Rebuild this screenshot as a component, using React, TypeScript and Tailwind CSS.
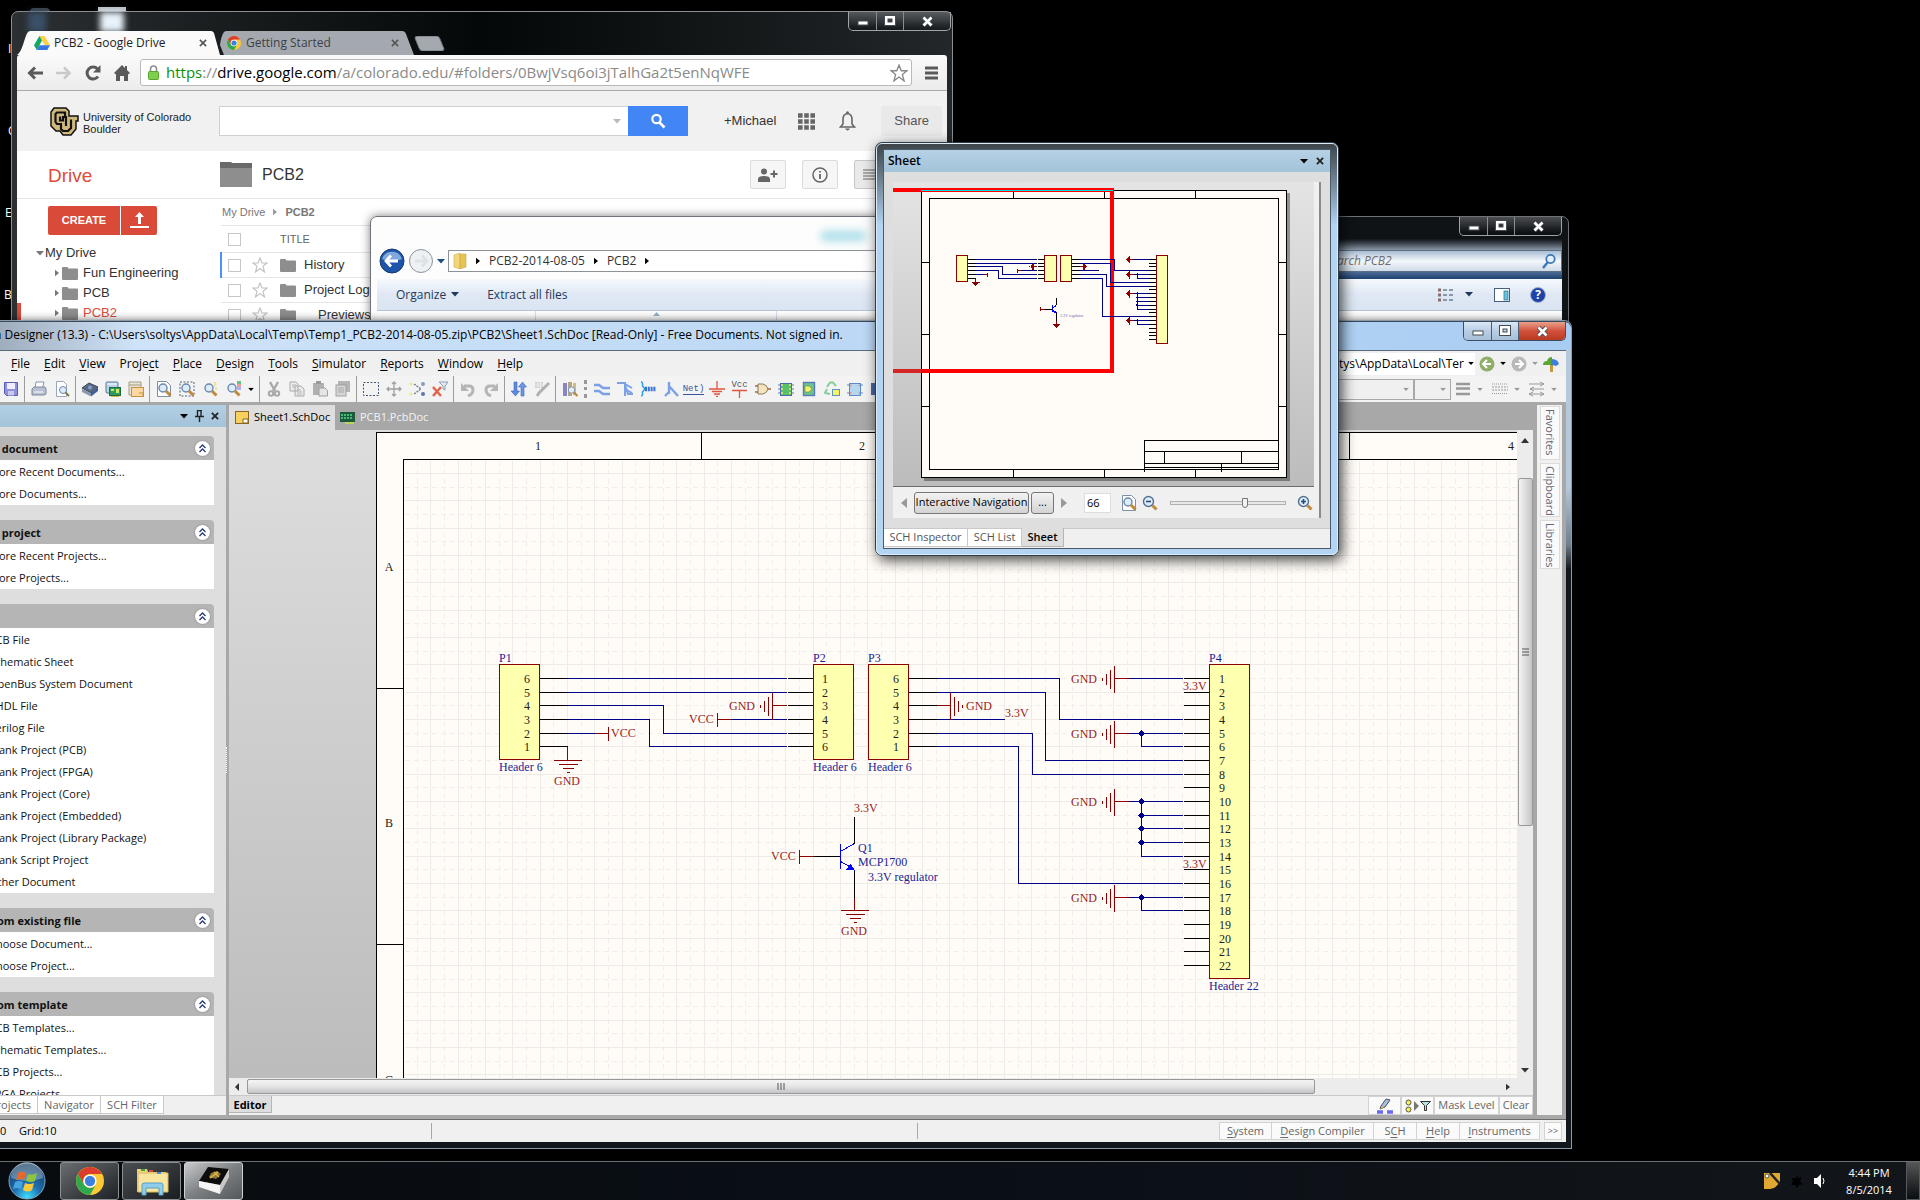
import React from "react";

const UI = "font-['Open_Sans','Noto_Sans',sans-serif]";
const ARIAL = "font-['Liberation_Sans',Arial,sans-serif]";

/* ---------- small shared pieces ---------- */

function Svg({ w = 16, h = 16, vb, children, cls = "" }: { w?: number; h?: number; vb?: string; children: React.ReactNode; cls?: string }) {
  return (
    <svg width={w} height={h} viewBox={vb ?? `0 0 ${w} ${h}`} fill="none" className={"shrink-0 " + cls} aria-hidden="true">
      {children}
    </svg>
  );
}

function Mnemonic({ text }: { text: string }) {
  const i = text.indexOf("&");
  if (i < 0) return <>{text}</>;
  return (
    <span>
      {text.slice(0, i)}
      <u className="underline-offset-2">{text[i + 1]}</u>
      {text.slice(i + 2)}
    </span>
  );
}

const Caret = ({ color = "#000", cls = "" }: { color?: string; cls?: string }) => (
  <Svg w={8} h={5} cls={cls}><path d="M0 0h8L4 4.5z" fill={color} /></Svg>
);
const CaretRight = ({ color = "#000", w = 5, h = 8 }: { color?: string; w?: number; h?: number }) => (
  <Svg w={w} h={h} vb="0 0 5 8"><path d="M0 0v8l5-4z" fill={color} /></Svg>
);
const Cross = ({ color = "#222", s = 9, sw = 2 }: { color?: string; s?: number; sw?: number }) => (
  <Svg w={s} h={s} vb="0 0 9 9"><path d="M1 1l7 7M8 1l-7 7" stroke={color} strokeWidth={sw} /></Svg>
);

function WindowButtons({ active = false }: { active?: boolean }) {
  const base = "flex h-full items-center justify-center border-r ";
  const tone = active
    ? "border-[#4d5d70] bg-linear-to-b from-[#dbe8f5] via-[#b9cee4] to-[#a6bfda]"
    : "border-[#8a8d90] bg-linear-to-b from-white/25 via-white/10 to-black/20";
  return (
    <div className={"flex h-[19px] overflow-hidden rounded-b-[5px] border border-t-0 " + (active ? "border-[#3f4f63]" : "border-[#a0a3a6]")}>
      <button aria-label="Minimize" className={base + tone + " w-[28px]"}>
        <Svg w={14} h={12}><rect x="2" y="6" width="10" height="4" fill="#fff" stroke="#444b55" /></Svg>
      </button>
      <button aria-label="Maximize" className={base + tone + " w-[27px]"}>
        <Svg w={12} h={12}><rect x="2.5" y="2.5" width="7" height="6" stroke="#fff" strokeWidth="3" /><rect x=".5" y=".5" width="11" height="10" stroke="#444b55" /><rect x="4" y="4" width="4" height="3" stroke="#444b55" /></Svg>
      </button>
      <button
        aria-label="Close"
        className={"flex h-full w-[46px] items-center justify-center " + (active ? "bg-linear-to-b from-[#e8a08c] via-[#d2503a] to-[#b83a22]" : "bg-linear-to-b from-white/25 via-white/10 to-black/20")}
      >
        <Svg w={13} h={11}><path d="M2.5 1.5l8 8M10.5 1.5l-8 8" stroke="#444b55" strokeWidth="4.5" /><path d="M2.5 1.5l8 8M10.5 1.5l-8 8" stroke="#fff" strokeWidth="2.6" /></Svg>
      </button>
    </div>
  );
}

/* ---------- browser window ---------- */

const DriveLogo = () => (
  <Svg w={16} h={14}>
    <path d="M5.4 0h5.2L16 9.3h-5.3z" fill="#ffcf48" />
    <path d="M5.4 0L0 9.3 2.7 14 8 4.6z" fill="#11a861" />
    <path d="M5.3 9.3H16L13.3 14H2.7z" fill="#3777e3" />
  </Svg>
);
const ChromeLogo = ({ s = 14 }: { s?: number }) => (
  <Svg w={s} h={s} vb="0 0 28 28">
    <circle cx="14" cy="14" r="14" fill="#fcc934" />
    <path d="M1.9 7A14 14 0 0 1 26.1 7H14a7 7 0 0 0-6 10.5z" fill="#dd3b2c" />
    <path d="M1.9 7A14 14 0 0 0 14 28l6-10.500a7 7 0 0 1-12 0z" fill="#2da94f" />
    <circle cx="14" cy="14" r="6.600" fill="#fff" />
    <circle cx="14" cy="14" r="5.200" fill="#3f7fe0" />
  </Svg>
);
const Folder = ({ w = 16, h = 13 }: { w?: number; h?: number }) => (
  <Svg w={w} h={h} vb="0 0 16 13"><path d="M0 1q0-1 1-1h4.500l1 1.500H15q1 0 1 1V12q0 1-1 1H1q-1 0-1-1z" fill="#8e8e8e" /></Svg>
);
const Star = ({ s = 16, c = "#c4c4c4" }: { s?: number; c?: string }) => (
  <Svg w={s} h={s} vb="0 0 16 16"><path d="M8 1l2 5h5l-4 3.300L12.500 15 8 11.600 3.500 15 5 9.300 1 6h5z" stroke={c} strokeWidth="1.200" /></Svg>
);

function BrowserWindow() {
  const tree = ["Fun Engineering", "PCB", "PCB2"];
  const files: [string, string][] = [["History", ""], ["Project Log", ""], ["Previews", "pl-[14px]"]];
  return (
    <section className="absolute left-[11px] top-[11px] flex h-[400px] w-[942px] flex-col rounded-t-[7px] border border-[#8b8f92] bg-linear-to-r from-[#2c3033] via-[#050808] to-[#23272a] px-[5px]">
      <div className="pointer-events-none absolute left-0 top-0 flex h-[20px] pl-[16px] blur-[3px]">
        <span className="h-[20px] w-[18px] bg-[#3b5068]" />
        <span className="ml-[54px] h-[20px] w-[24px] bg-[#e8f2fa]" />
      </div>
      <div className="absolute right-[1px] top-0"><WindowButtons /></div>
      <div className="flex h-[43px] items-end">
        <div className="relative flex h-[24px] w-[203px] items-center">
          <svg className="absolute inset-0" width="204" height="24" aria-hidden="true"><path d="M0 24C6 20 7 6 11 1Q12 0 14 0H194Q196 0 197 2L203 24z" fill="#fafafa" /></svg>
          <div className={"relative flex w-full items-center pl-[17px] pr-[11px] text-[12px] text-[#222] " + UI}>
            <DriveLogo />
            <span className="ml-[4px] flex-1">PCB2 - Google Drive</span>
            <button aria-label="Close tab" className="pr-[2px]"><Cross color="#555" s={8} sw={1.800} /></button>
          </div>
        </div>
        <div className="relative flex h-[24px] w-[194px] items-center">
          <svg className="absolute inset-0" width="194" height="24" aria-hidden="true"><path d="M4 24L0 14Q1 5 4 1 5 0 7 0H182Q185 0 186 3L194 24z" fill="#a4a9b0" /></svg>
          <div className={"relative flex w-full items-center pl-[7px] pr-[13px] text-[12px] text-[#3b3f45] " + UI}>
            <ChromeLogo />
            <span className="ml-[5px] flex-1">Getting Started</span>
            <button aria-label="Close tab" className="pr-[2px]"><Cross color="#555" s={8} sw={1.800} /></button>
          </div>
        </div>
        <button aria-label="New tab" className="pb-[4px]"><Svg w={31} h={15}><path d="M1 2Q1 0 4 0h18q3 0 4 3l4 10q0 2-3 2H9q-3 0-4-3z" fill="#a4a9b0" stroke="#6f757b" /></Svg></button>
      </div>

      <div className="flex h-[36px] shrink-0 items-center gap-[13px] rounded-t-[3px] border-b border-[#a9a9a9] bg-linear-to-b from-[#fafafa] to-[#ececec] pl-[10px] pr-[8px]">
        <button aria-label="Back"><Svg><path d="M8 2.500L2.500 8 8 13.500M3 8h13" stroke="#5a5a5a" strokeWidth="3" /></Svg></button>
        <button aria-label="Forward"><Svg><path d="M8 2.500L13.500 8 8 13.500M13 8H0" stroke="#c9c9c9" strokeWidth="2.500" /></Svg></button>
        <button aria-label="Reload"><Svg><path d="M13 11.500A6 6 0 1 1 12.500 4" stroke="#5a5a5a" strokeWidth="3" /><path d="M15.500 0v7.500H8z" fill="#5a5a5a" /></Svg></button>
        <button aria-label="Home"><Svg><path d="M8 0L0 8l2 1.500V16h4v-5h4v5h4V9.500L16 8l-3-3V1h-2v2z" fill="#5a5a5a" /></Svg></button>
        <div className="-ml-[3px] flex h-[27px] flex-1 items-center gap-[7px] rounded-[3px] border border-[#b9b9b9] bg-white pl-[7px] pr-[3px]">
          <Svg w={11} h={15}><path d="M2.500 7V4a3 3 0 0 1 6 0v3" stroke="#8c9094" strokeWidth="1.600" /><rect x=".5" y="6.500" width="10" height="8" rx="1" fill="#7fcf4f" stroke="#57a32c" /></Svg>
          <span className={"flex-1 whitespace-nowrap text-[15px] text-[#8a8a8a] " + UI}>
            <span className="text-[#0b8f08]">https</span>://<span className="text-black">drive.google.com</span>/a/colorado.edu/#folders/0BwjVsq6oi3jTalhGa2t5enNqWFE
          </span>
          <button aria-label="Bookmark this page"><Star s={18} c="#8a8a8a" /></button>
        </div>
        <button aria-label="Menu"><Svg w={14} h={14}><path d="M0 2h13M0 7h13M0 12h13" stroke="#5a5a5a" strokeWidth="3" /></Svg></button>
      </div>

      <div className={"flex flex-1 flex-col overflow-hidden bg-white text-[13px] text-[#333] " + ARIAL}>
        <header className="flex h-[60px] shrink-0 items-center bg-[#f1f1f1] pl-[33px] pr-[5px]">
          <Svg w={29} h={29}>
            <path d="M4 1h12l3 3v5h9v5h-2v8l-5 6h-8l-3-4H6l-5-5V5z" fill="#cfb87c" stroke="#111" strokeWidth="1.500" />
            <path d="M15 9V5.500H7L5.500 7v8L7 17h4v5l2 2h5l3-3v-8.500" stroke="#111" strokeWidth="2.200" />
            <path d="M10 9.500v4h3V10h3v9" stroke="#111" strokeWidth="2.200" />
          </Svg>
          <div className="ml-[4px] w-[136px] pr-[20px] pt-[3px] text-[11px] leading-[12px] text-[#222]">University of Colorado Boulder</div>
          <div className="flex h-[30px] w-[409px] items-center border border-r-0 border-[#d0d0d0] bg-white">
            <input aria-label="Search Drive" className="h-full min-w-0 flex-1 px-2 outline-none" />
            <button aria-label="Search options" className="px-[7px]"><Caret color="#b8b8b8" /></button>
          </div>
          <button aria-label="Search" className="flex h-[30px] w-[60px] items-center justify-center bg-[#4285f4]">
            <Svg><circle cx="6.500" cy="6" r="4.200" stroke="#fff" strokeWidth="2.200" /><path d="M9.500 9.500l5 5" stroke="#fff" strokeWidth="2.600" /></Svg>
          </button>
          <a href="#michael" className="ml-[36px]">+Michael</a>
          <button aria-label="Apps" className="ml-[22px]">
            <Svg w={17} h={17}><path d="M0 2.500h17M0 8.500h17M0 14.500h17" stroke="#666" strokeWidth="4.600" strokeDasharray="4.600 1.600" /></Svg>
          </button>
          <button aria-label="Notifications" className="ml-[24px]">
            <Svg w={17} h={20}><path d="M8.500 2.500q-4.500.500-4.500 6v4.500l-2.500 3h14l-2.500-3V8.500q0-5.500-4.500-6z" stroke="#666" strokeWidth="1.600" /><circle cx="8.500" cy="1.800" r="1.500" fill="#666" /><path d="M6 17.500h5q-2.500 4-5 0z" fill="#666" /></Svg>
          </button>
          <button className="ml-[25px] h-[30px] flex-1 rounded-[2px] bg-[#e9e9e9] text-[#555]">Share</button>
        </header>
        <div className="flex h-[48px] shrink-0 items-center border-b border-[#e5e5e5] pl-[31px]">
          <h1 className="w-[172px] pt-[3px] text-[19px] text-[#dd4b39]">Drive</h1>
          <Svg w={32} h={25}><path d="M0 0h11l1 2h20v23H0z" fill="#8e8e8e" /><path d="M0 0h11l1 1h20v5H0z" fill="#6a6a6a" /></Svg>
          <h2 className="ml-[10px] w-[488px] text-[16px]">PCB2</h2>
          <div className="flex gap-[16px]">
            <button aria-label="Share folder" className="flex h-[29px] w-[36px] items-center justify-center rounded-[2px] border border-[#dcdcdc] bg-[#f6f6f6]">
              <Svg w={20} h={14}><circle cx="6" cy="3.500" r="3" fill="#666" /><path d="M0 14v-3q0-3 6-3t6 3v3z" fill="#666" /><path d="M12.500 6h7M16 2.500v7" stroke="#666" strokeWidth="2" /></Svg>
            </button>
            <button aria-label="Details" className="flex h-[29px] w-[36px] items-center justify-center rounded-[2px] border border-[#dcdcdc] bg-[#f6f6f6]">
              <Svg><circle cx="8" cy="8" r="7" stroke="#666" strokeWidth="1.500" /><path d="M8 7v5M8 4v1.500" stroke="#666" strokeWidth="1.800" /></Svg>
            </button>
            <button aria-label="List view" className="flex h-[29px] w-[36px] items-center rounded-[2px] border border-[#c8c8c8] bg-[#e9e9e9] pl-[8px]">
              <Svg><path d="M0 3h16M0 6h16M0 9h16M0 12h16" stroke="#666" /></Svg>
            </button>
          </div>
        </div>
        <div className="flex flex-1">
          <nav className="w-[203px] pt-[7px]">
            <div className="flex gap-[1px] pl-[31px]">
              <button className="h-[29px] w-[72px] rounded-l-[2px] bg-[#d94a38] text-[11px] font-bold text-white">CREATE</button>
              <button aria-label="Upload" className="flex h-[29px] w-[36px] items-center justify-center rounded-r-[2px] bg-[#d94a38]">
                <Svg w={19} h={17}><path d="M9.500 0L14 5h-3v7H8V5H5z" fill="#fff" /><path d="M0 15h19" stroke="#fff" strokeWidth="2" /></Svg>
              </button>
            </div>
            <div className="mt-[8px] flex h-[20px] items-center pl-[19px]"><Caret color="#777" /><span className="ml-[1px]">My Drive</span></div>
            {tree.map((t) => (
              <div key={t} className={"flex h-[20px] items-center " + (t === "PCB2" ? "border-l-4 border-[#d94a38] pl-[34px] text-[#dd4b39]" : "pl-[38px]")}>
                <CaretRight color="#777" w={4} h={8} />
                <span className="ml-[3px] mr-[5px] flex"><Folder /></span>
                <a href="#folder">{t}</a>
              </div>
            ))}
          </nav>
          <div className="flex-1">
            <div className="flex h-[26px] items-center gap-[8px] pl-[2px] text-[11px] text-[#777]">
              <a href="#root">My Drive</a><CaretRight color="#999" w={4} h={8} /><b>PCB2</b>
            </div>
            <table className="w-full border-collapse">
              <thead>
                <tr className="h-[27px] border-y border-[#e5e5e5] text-left text-[11px] font-normal text-[#666]">
                  <th className="w-[31px] pl-[7px] font-normal"><input type="checkbox" aria-label="Select all" className="block size-[13px] appearance-none border border-[#c6c6c6]" /></th>
                  <th className="w-[28px]" />
                  <th className="font-normal">TITLE</th>
                </tr>
              </thead>
              <tbody>
                {files.map(([f, pad], i) => (
                  <tr key={f} className="h-[25px] border-b border-[#e5e5e5]">
                    <td className={i === 0 ? "border-l-2 border-[#4d90fe] pl-[6px]" : "pl-[7px]"}><input type="checkbox" aria-label={"Select " + f} className="block size-[13px] appearance-none border border-[#c6c6c6]" /></td>
                    <td><button aria-label={"Star " + f} className="block"><Star /></button></td>
                    <td><span className="flex items-center gap-[8px]"><Folder /><span className={pad}>{f}</span></span></td>
                  </tr>
                ))}
              </tbody>
            </table>
          </div>
        </div>
      </div>
    </section>
  );
}

/* ---------- file explorer window ---------- */

function ExplorerWindow() {
  return (
    <section className={"absolute left-[370px] top-[216px] flex h-[200px] w-[1199px] flex-col rounded-t-[7px] border border-[#6d7378] bg-linear-to-r from-[#fdfdfd] from-40% via-[#eef1f3] via-48% to-[#101316] to-55% px-[6px] text-[12px] shadow-[0_0_10px_rgba(0,0,0,0.5)] " + UI}>
      <div className="pointer-events-none absolute right-[6px] top-[22px] h-[40px] w-[300px] bg-linear-to-b from-[#12161b] via-[#c9dcf2] via-40% to-[#1d4070]" />
      <div className="pointer-events-none absolute left-[450px] top-[14px] flex gap-[120px] blur-[4px]"><span className="h-[10px] w-[44px] bg-[#a8dce8]" /></div>
      <div className="relative flex h-[21px] justify-end"><WindowButtons /></div>
      <div className="relative flex h-[41px] items-center gap-[3px] pl-[2px] pt-[5px]">
        <button aria-label="Back"><Svg w={26} h={26}><circle cx="13" cy="13" r="12" fill="#1d55a8" stroke="#17386b" /><path d="M3 11a10.500 10.500 0 0 1 20 0q-10 4-20 0z" fill="#7fa9dc" /><path d="M12 7.500L7 13l5 5.500M7.500 13H19" stroke="#fff" strokeWidth="2.800" /></Svg></button>
        <button aria-label="Forward"><Svg w={26} h={26}><circle cx="13" cy="13" r="11.500" fill="#eef1f4" stroke="#8c949b" /><path d="M14 7.500l5 5.500-5 5.500M18.500 13H7" stroke="#dde2e6" strokeWidth="2.800" /></Svg></button>
        <Caret color="#1d4d86" />
        <div className="flex h-[22px] w-[500px] items-center gap-[9px] border border-[#8d9296] bg-white/80 px-[4px] text-[#333]">
          <Svg w={14} h={16}><path d="M1 2l6-2v16l-6-2z" fill="#f3d67a" stroke="#c9a74a" strokeWidth=".6" /><path d="M7 1h6v13l-6 2z" fill="#e9c254" stroke="#c9a74a" strokeWidth=".6" /></Svg>
          <CaretRight w={4} />
          <span>PCB2-2014-08-05</span>
          <CaretRight w={4} />
          <span>PCB2</span>
          <CaretRight w={4} />
        </div>
        <div className="ml-[6px] flex h-[22px] flex-1 items-center border border-[#5d6f86] bg-linear-to-b from-[#a9bdd3] via-[#f3f7fb] to-[#cfdbe8] px-[5px]">
          <input aria-label="Search PCB2" placeholder="Search PCB2" className="min-w-0 flex-1 pl-[362px] italic outline-none placeholder:text-[#6d6d6d]" />
          <Svg w={14} h={16}><circle cx="8.500" cy="6" r="4.200" fill="#e4f1fb" stroke="#3a78b8" strokeWidth="1.800" /><path d="M5.500 9.500L1 15" stroke="#3a78b8" strokeWidth="2.400" /></Svg>
        </div>
      </div>
      <div className="relative flex h-[32px] items-center border-b border-[#b5c3d4] bg-linear-to-b from-[#f6f9fd] via-[#dfe8f4] to-[#dbe5f2] pl-[19px] pr-[16px] text-[#1e395b]">
        <button className="flex items-center gap-[5px]">Organize <Caret color="#1e395b" /></button>
        <button className="ml-[28px] flex-1 text-left">Extract all files</button>
        <button aria-label="Change view" className="flex items-center gap-[11px]">
          <Svg w={16} h={14}><path d="M0 2h3M0 7h3M0 12h3" stroke="#8b6d6d" strokeWidth="3" /><path d="M5 2h4M11 2h4M5 7h4M11 7h4M5 12h4M11 12h4" stroke="#6c7f95" strokeWidth="1.500" /></Svg>
          <Caret color="#1e395b" />
        </button>
        <button aria-label="Preview pane" className="ml-[21px]"><Svg><rect x=".5" y="1.500" width="15" height="13" fill="#fff" stroke="#44607f" /><rect x="10" y="4" width="4" height="9" fill="#63c3e0" stroke="#3a7a97" strokeWidth=".8" /></Svg></button>
        <button aria-label="Help" className="ml-[20px] flex size-[16px] items-center justify-center rounded-full border border-[#9fb0c5] bg-[#1d43a8] text-[12px] font-bold text-white">?</button>
      </div>
      <div className="flex flex-1 bg-white">
        <span className="w-[159px] border-r border-[#d8e0ea]" />
        <span className="flex w-[241px] justify-center border-r border-[#d8e0ea] pt-[1px]"><Svg w={7} h={4}><path d="M0 4l3.500-4L7 4z" fill="#8fb6cf" /></Svg></span>
      </div>
    </section>
  );
}

/* ---------- schematic drawing ---------- */

const rowY = (n: number) => Math.round(678 + (n - 1) * 13.66);
const SIX = [1, 2, 3, 4, 5, 6];
const P4_ROWS = Array.from({ length: 22 }, (_, i) => i + 1);
const WIRE = "#00008b";
const POWER = "#8b0000";

const wires: string[] = [
  `M567 ${rowY(1)}H786`,
  `M567 ${rowY(2)}H786`,
  `M567 ${rowY(3)}H663V${rowY(5)}H786`,
  `M567 ${rowY(4)}H649V${rowY(6)}H786`,
  `M567 ${rowY(5)}H594`,
  `M731 ${rowY(4)}H786`,
  `M936 ${rowY(1)}H1059V${rowY(4)}H1182`,
  `M936 ${rowY(2)}H1045V${rowY(7)}H1182`,
  `M936 ${rowY(4)}H1004`,
  `M936 ${rowY(5)}H1032V${rowY(8)}H1182`,
  `M936 ${rowY(6)}H1018V${rowY(16)}H1182`,
  `M1127 ${rowY(1)}H1182`,
  `M1127 ${rowY(5)}H1182M1141 ${rowY(5)}V${rowY(6)}H1182`,
  `M1127 ${rowY(10)}H1182M1141 ${rowY(10)}V${rowY(14)}H1182M1141 ${rowY(11)}H1182M1141 ${rowY(12)}H1182M1141 ${rowY(13)}H1182`,
  `M1127 ${rowY(17)}H1182M1141 ${rowY(17)}V${rowY(18)}H1182`,
];

const sideGround = (x: number, y: number, dir: 1 | -1) =>
  `M${x - 14 * dir} ${y}H${x}M${x} ${y - 13}v27M${x + 4 * dir} ${y - 9}v19M${x + 8 * dir} ${y - 5}v11M${x + 12 * dir} ${y - 1}v3`;
const downGround = (x: number, y: number) => `M${x} ${y - 14}V${y}M${x - 14} ${y}h28M${x - 9} ${y + 4}h19M${x - 5} ${y + 8}h11M${x - 1} ${y + 12}h3`;

function Circuit({ mini = false }: { mini?: boolean }) {
  const ve = mini ? ("non-scaling-stroke" as const) : undefined;
  return (
    <g fill="none" shapeRendering="crispEdges">
      <path vectorEffect={ve} stroke={WIRE} d={wires.join("")} />
      <path
        vectorEffect={ve}
        stroke={POWER}
        d={
          [1, 5, 10, 17].map((r) => sideGround(1114, rowY(r), -1)).join("") +
          sideGround(772, rowY(3), -1) + sideGround(950, rowY(3), 1) + downGround(567, 760) + downGround(854, 910) +
          `M594 ${rowY(5)}h14M608 726v14M717 ${rowY(4)}h14M717 712v14M799 856h14M799 849v14`
        }
      />
      <path
        vectorEffect={ve}
        stroke="#000"
        d={
          SIX.map((r) => `M539 ${rowY(r)}h28M787 ${rowY(r)}h26M908 ${rowY(r)}h28`).join("") +
          P4_ROWS.map((r) => `M1183 ${rowY(r)}h26`).join("") +
          "M813 856h27M854 816v27M854 869v28"
        }
      />
      <g stroke={POWER} fill="#ffffb0">
        <rect vectorEffect={ve} x="499" y="664" width="40" height="95" />
        <rect vectorEffect={ve} x="813" y="664" width="40" height="95" />
        <rect vectorEffect={ve} x="868" y="664" width="40" height="95" />
        <rect vectorEffect={ve} x="1209" y="664" width="40" height="314" />
      </g>
      <path vectorEffect={ve} stroke="#0000ff" d="M840 843v25M840 851l14-8M840 861l14 8" />
      <path fill="#0000ff" d="M854 870l-8-1 4-6z" />
      {[5, 10, 11, 12, 13, 17].map((r) => <path key={r} d={`M1141 ${rowY(r) - 3}l3 3-3 3-3-3z`} stroke={WIRE} vectorEffect={ve} fill={WIRE} />)}
    </g>
  );
}

function SchematicSheet() {
  const vSolid: number[] = [], vDash: number[] = [], hSolid: number[] = [], hDash: number[] = [];
  for (let k = 1; k < 84; k++) (k % 2 ? vDash : vSolid).push(Math.round(403 + k * 13.66));
  for (let k = 1; k < 48; k++) (k % 2 ? hSolid : hDash).push(Math.round(459.500 + k * 13.66));
  return (
    <svg width="1141" height="646" viewBox="376 432 1141 646" className="block shrink-0 font-['Liberation_Serif',serif] text-[12px]" role="img" aria-label="Schematic sheet">
      <g transform="translate(.5 .5)" shapeRendering="crispEdges" fill="none">
        <rect x="376" y="432" width="1200" height="800" fill="#fffcf7" stroke="#000" />
        <path stroke="#f0efeb" strokeDasharray="5 4" d={vDash.map((x) => `M${x} 460V1080`).join("") + hDash.map((y) => `M404 ${y}H1520`).join("")} />
        <path stroke="#edece9" d={vSolid.map((x) => `M${x} 460V1080`).join("") + hSolid.map((y) => `M404 ${y}H1520`).join("")} />
        <path stroke="#000" d="M403 1080V459H1520M701 432V459M1025 432V459M1349 432V459M376 688H403M376 944H403" />
        <Circuit />
      </g>
      <g fill="#222" textAnchor="middle">
        <text x="538" y="450">1</text><text x="862" y="450">2</text><text x="1511" y="450">4</text>
        <text x="389" y="571">A</text><text x="389" y="827">B</text><text x="389" y="1084">C</text>
        {SIX.map((n) => (
          <React.Fragment key={n}>
            <text x="527" y={rowY(7 - n) + 5}>{n}</text>
            <text x="825" y={rowY(n) + 5}>{n}</text>
            <text x="896" y={rowY(7 - n) + 5}>{n}</text>
          </React.Fragment>
        ))}
      </g>
      <g fill="#222">{P4_ROWS.map((n) => <text key={n} x="1219" y={rowY(n) + 5}>{n}</text>)}</g>
      <g fill="#1c1c96">
        <text x="499" y="662">P1</text><text x="813" y="662">P2</text><text x="868" y="662">P3</text><text x="1209" y="662">P4</text>
        <text x="499" y="771">Header 6</text><text x="813" y="771">Header 6</text><text x="868" y="771">Header 6</text><text x="1209" y="990">Header 22</text>
        <text x="858" y="852">Q1</text><text x="858" y="866">MCP1700</text><text x="868" y="881">3.3V regulator</text>
      </g>
      <g fill="#981c1c">
        <text x="611" y="737">VCC</text><text x="689" y="723">VCC</text><text x="771" y="860">VCC</text>
        <text x="554" y="785">GND</text><text x="729" y="710">GND</text><text x="966" y="710">GND</text><text x="841" y="935">GND</text>
        {[1, 5, 10, 17].map((r) => <text key={r} x="1071" y={rowY(r) + 5}>GND</text>)}
        <text x="854" y="812">3.3V</text><text x="1005" y="717">3.3V</text><text x="1183" y="690">3.3V</text><text x="1183" y="868">3.3V</text>
      </g>
    </svg>
  );
}

function SheetPreview() {
  return (
    <svg width="422" height="304" viewBox="893 182 422 304" className="block" role="img" aria-label="Sheet overview">
      <rect x="924" y="193" width="366" height="288" fill="#000" opacity=".35" />
      <g transform="translate(.5 .5)" shapeRendering="crispEdges" fill="none" stroke="#000">
        <rect x="921" y="190" width="365" height="287" fill="#fffcf7" />
        <rect x="929" y="198" width="349" height="271" />
        <path d="M1013 190v8M1104 190v8M1195 190v8M1013 469v8M1104 469v8M1195 469v8M921 262h8M921 334h8M921 406h8M1278 262h8M1278 334h8M1278 406h8" />
        <path d="M1144 471V440H1278M1144 451H1278M1144 463H1278M1144 467H1278M1164 451v12M1241 451v12M1221 463v8" />
      </g>
      <path d="M893 190H1112V371H893" fill="none" stroke="#ff0000" strokeWidth="4" />
      <path d="M893 369h28v4h-28z" fill="#8a6a6a" opacity=".35" />
      <path d="M921 190.500H1113" stroke="#00e0e0" />
      <g transform="translate(815.8 69) scale(.2818 .2805)"><Circuit mini /></g>
      <text x="1060" y="317" fill="#6a6ab0" className="font-['Liberation_Serif',serif] text-[4px]">3.3V regulator</text>
    </svg>
  );
}

/* ---------- toolbar icons ---------- */

const MagBase = () => (<><circle cx="7" cy="7" r="4" fill="#dcecfa" stroke="#6c88a8" strokeWidth="1.400" /><path d="M10 10l4.500 4.500" stroke="#c08a3c" strokeWidth="3" /></>);
const PageShape = ({ c = "#fff", s = "#7d8fa6" }: { c?: string; s?: string }) => <path d="M1.500.5h9l4 4v11h-13z" fill={c} stroke={s} />;

const ICONS: Record<string, React.ReactNode> = {
  Save: <><path d="M1.500 1.500h13v13h-11l-2-2z" fill="#8f90de" stroke="#5a5cb4" /><rect x="4" y="2" width="8" height="6" fill="#eef" /><rect x="5" y="10" width="6" height="4.500" fill="#c9cbe8" /></>,
  Print: <><path d="M5 1h8l-1.500 6H4z" fill="#fff" stroke="#8795ab" /><path d="M1 8l2-2h11l1 2v5l-2 1H1z" fill="#b8c2d2" stroke="#7a889c" /><path d="M3 11h9" stroke="#fff" /></>,
  "Print preview": <><path d="M2.500.5h7l3 3v12h-10z" fill="#fff" stroke="#9aa7b8" /><circle cx="9" cy="9" r="3.500" fill="#dcecfa" stroke="#6c88a8" /><path d="M11.500 11.500l3.500 3.500" stroke="#8a7348" strokeWidth="2" /></>,
  Compile: <><path d="M0 7l7-5 9 4-7 6z" fill="#5b6a80" stroke="#39465a" /><path d="M0 8v3l9 4.500V12z" fill="#8a98ab" /><path d="M9 12v3.500L16 10V6.500z" fill="#3e5f9c" /><circle cx="8" cy="6.500" r="2" fill="#7fa2d6" /></>,
  "Board view": <><rect x="1" y="1" width="12" height="11" rx="1" fill="#b9d3e8" stroke="#5b7a9a" /><path d="M2 3h10" stroke="#fff" /><rect x="4.500" y="6.500" width="11" height="8" fill="#2f9a5b" stroke="#1d6a3c" /><path d="M6 8h3v2H6zM11 8h3v4h-3z" fill="#c9e86a" /><path d="M6 15.500h8" stroke="#d8b54a" /></>,
  Documents: <><path d="M1 1h12v13H1z" fill="#e6e4dc" stroke="#a99c7c" /><path d="M1 4h12" stroke="#a99c7c" /><rect x="3.500" y="6.500" width="12" height="9" fill="#fbd8a0" stroke="#c8923c" /><path d="M11 12h4v3" stroke="#c8923c" /></>,
  "Fit document": <><PageShape /><MagBase /></>,
  "Fit area": <><path d="M1 1h14v14H1z" stroke="#51627a" strokeDasharray="2 1.500" /><MagBase /></>,
  "Zoom selected": <><MagBase /><path d="M12 1l2 2-2 2M14 6v3" stroke="#e8e08a" strokeWidth="1.500" /></>,
  "Zoom filter": <><MagBase /><path d="M12 0h4v3h-4z" fill="#6ac08a" /><path d="M12 3h4v3h-4z" fill="#eaa0a0" /><path d="M12 6h4v3h-4z" fill="#b0b0f0" /></>,
  Cut: <><path d="M4 1l5 9M12 1L7 10" stroke="#a9a9a9" strokeWidth="2.400" /><circle cx="5" cy="12.500" r="2.200" stroke="#a9a9a9" strokeWidth="2" /><circle cx="11" cy="12.500" r="2.200" stroke="#a9a9a9" strokeWidth="2" /></>,
  Copy: <><path d="M1 1h6l2 2v7H1zM6 5h6l3 3v7H6z" fill="#ececec" stroke="#a9a9a9" /><path d="M3 4h4M3 6h3M8 9h4M8 11h5M8 13h5" stroke="#b5b5b5" /></>,
  Paste: <><rect x="1" y="2" width="11" height="12" fill="#b0b0b0" /><rect x="4" y="0" width="5" height="3" fill="#999" /><path d="M7 7h6l2.500 2.500V15H7z" fill="#e6e6e6" stroke="#a0a0a0" /></>,
  "Paste array": <><rect x="3" y="0" width="12" height="11" fill="#b5b5b5" /><rect x="1" y="4" width="10" height="11" fill="#d5d5d5" stroke="#a0a0a0" /><path d="M3 7h6M3 9h6M3 11h6" stroke="#a9a9a9" /></>,
  "Select area": <path d="M.5 1.500h15v13H.500z" stroke="#3d5878" strokeDasharray="2 1.500" />,
  Move: <path d="M8 1v14M1 8h14M6 3l2-2 2 2M6 13l2 2 2-2M3 6L1 8l2 2M13 6l2 2-2 2" stroke="#a0a0a0" strokeWidth="1.300" />,
  Deselect: <><path d="M5 3l7 5-7 5" stroke="#6a7a9a" strokeDasharray="2 1" strokeWidth="1.400" /><circle cx="14" cy="3" r="2" fill="#8a9cc0" /><circle cx="14" cy="13" r="2" fill="#5d78ae" /><circle cx="2" cy="3" r="1.500" fill="#f0e68a" /><circle cx="2" cy="13" r="1.500" fill="#f0e68a" /></>,
  "Clear filter": <><path d="M7 1h9l-3 4v4l-2-1V5z" fill="#e2e9f2" stroke="#8ba0ba" /><path d="M1 6l8 9M9 6l-8 9" stroke="#e0664f" strokeWidth="2.600" /></>,
  Undo: <><path d="M4 5h5q4 0 4 4t-5 6" stroke="#b5b5b5" strokeWidth="3" /><path d="M1 2v8h8z" fill="#b5b5b5" /></>,
  Redo: <><path d="M12 5H7Q3 5 3 9t5 6" stroke="#b5b5b5" strokeWidth="3" /><path d="M15 2v8H7z" fill="#b5b5b5" /></>,
  Hierarchy: <><path d="M3 1h3v9h2.500L4.500 15 0 10h3z" fill="#5f8ae0" stroke="#3f65b8" strokeWidth=".6" /><path d="M10 15h3V6h2.500L11.500 1 7.500 6H10z" fill="#6c96e8" stroke="#3f65b8" strokeWidth=".6" /></>,
  "Cross probe": <><path d="M1 1h8v6H1z" fill="#c9c9c9" /><path d="M1 3h8M1 5h8M4 1v6M6.500 1v6" stroke="#eee" /><path d="M15 2L5 12l-2 3" stroke="#b0b0b0" strokeWidth="3" /></>,
  "Browse library": <><rect x="1" y="2" width="4" height="13" fill="#8c84c8" /><rect x="6" y="1" width="4" height="14" fill="#b0a884" /><rect x="11" y="2" width="3" height="12" fill="#d0bd7a" /><circle cx="9.500" cy="9" r="3.200" fill="#e4effa" stroke="#8195ac" /><path d="M12 11.500l3.500 3.500" stroke="#b58a3c" strokeWidth="2.200" /></>,
  "Place wire": <path d="M0 4h5l4 3h7M0 10h5l4 3h7" stroke="#7ba0e6" strokeWidth="2.400" />,
  "Place bus": <path d="M0 2h8v13M8 3l7 4M8 8l7 4M8 4l3 9h5" stroke="#7ba0e6" strokeWidth="2" />,
  "Place harness": <><path d="M1 1q2 0 1.500 4L5 8l-2.500 3Q3 15 1 15" stroke="#2a9fe0" strokeWidth="1.500" /><path d="M5 8h11" stroke="#3b6fd8" strokeWidth="4.600" strokeDasharray="2 .8" /></>,
  "Place bus entry": <path d="M6 1v12M6 5l9 10M2 15l4-4" stroke="#7ba0e6" strokeWidth="2.400" />,
  "GND power port": <path d="M8 0v8M0 8h16M3 10.500h10M5 13h6M7 15.500h2" stroke="#e0563f" strokeWidth="1.300" />,
  "Place part": <><path d="M0 5h4M0 11h4M11 8h5" stroke="#9a6a4a" strokeWidth="1.400" /><path d="M3 3h5q4 1 5 5-1 4-5 5H3z" fill="#f5e4bc" stroke="#8a7a5c" /></>,
  "Sheet symbol": <><path d="M0 4h16M0 8h16M0 12h16" stroke="#5a78b8" /><rect x="2.500" y="2.500" width="11" height="12" fill="#58c06a" stroke="#4a6aa8" /><path d="M3 4h2M3 8h2M3 12h2M11 4h2M11 8h2M11 12h2" stroke="#f0e86a" strokeWidth="1.500" /></>,
  "Sheet entry": <><rect x="2.500" y="1.500" width="11" height="13" fill="#6cc48a" stroke="#5a7ab8" strokeWidth="1.400" /><path d="M4 5h4l3 3-3 3H4z" fill="#f7f06a" stroke="#7a8a3c" strokeWidth=".6" /></>,
  "Device sheet": <><path d="M3 6l3-4.500h3L12 5M3 8l-2 4 5 1" stroke="#8acc9a" strokeWidth="2" /><rect x="8.500" y="8.500" width="7" height="6" fill="#f7f06a" stroke="#5a98b8" /></>,
  "Harness connector": <><path d="M0 4h16M0 12h16" stroke="#5a8ac8" /><rect x="2.500" y="2.500" width="11" height="12" fill="#b5d8f0" stroke="#5a8ac8" /><path d="M3 4.500h1.500M3 12h1.500M11.500 4.500H13M11.500 12H13" stroke="#e88a7a" strokeWidth="1.500" /></>,
  "Place port": <rect x="1" y="2" width="14" height="12" fill="#4a68a8" />,
};

const TOOLBAR: string[] = [
  "Save", "|", "Print", "Print preview", "|", "Compile", "Board view", "Documents", "|", "Fit document", "Fit area", "Zoom selected", "Zoom filter", "v", "|",
  "Cut", "Copy", "Paste", "Paste array", "|", "Select area", "Move", "Deselect", "Clear filter", "|", "Undo", "Redo", "|", "Hierarchy", "Cross probe", "|", "Browse library", "::",
  "Place wire", "Place bus", "Place harness", "Place bus entry", "Net", "GND power port", "Vcc", "Place part", "Sheet symbol", "Sheet entry", "Device sheet", "Harness connector", "Place port",
];

function ToolbarItem({ name }: { name: string }) {
  if (name === "|") return <span className="mx-[2px] h-[26px] w-px bg-[#9c9c9c]" />;
  if (name === "v") return <button aria-label="More zoom options" className="flex w-[13px] justify-center"><Caret cls="scale-75" /></button>;
  if (name === "::") return <span className="mx-[3px] h-[18px] border-l-[3px] border-dotted border-[#9a9a9a]" />;
  if (name === "Net") return <button aria-label="Place net label" className="flex w-[23px] justify-center"><span className="border-b border-[#3a55a0] font-['Liberation_Mono',monospace] text-[9px] leading-[10px] text-[#3a55a0]">Net)</span></button>;
  if (name === "Vcc")
    return (
      <button aria-label="VCC power port" className="flex w-[23px] flex-col items-center font-['Liberation_Mono',monospace] text-[9px] leading-[8px] text-[#555]">
        Vcc
        <Svg w={15} h={9}><path d="M0 1.500h15M7.500 1v8" stroke="#e0563f" strokeWidth="1.300" /></Svg>
      </button>
    );
  return <button aria-label={name} className="flex w-[23px] justify-center"><Svg>{ICONS[name]}</Svg></button>;
}

/* ---------- schematic editor window ---------- */

const MENUS = ["&File", "&Edit", "&View", "Proje&ct", "&Place", "&Design", "&Tools", "&Simulator", "&Reports", "&Window", "&Help"];
const GROUPS: [string, string[]][] = [
  ["Open a document", ["More Recent Documents...", "More Documents..."]],
  ["Open a project", ["More Recent Projects...", "More Projects..."]],
  ["New", ["PCB File", "Schematic Sheet", "OpenBus System Document", "VHDL File", "Verilog File", "Blank Project (PCB)", "Blank Project (FPGA)", "Blank Project (Core)", "Blank Project (Embedded)", "Blank Project (Library Package)", "Blank Script Project", "Other Document"]],
  ["New from existing file", ["Choose Document...", "Choose Project..."]],
  ["New from template", ["PCB Templates...", "Schematic Templates...", "PCB Projects...", "FPGA Projects..."]],
];
const PANEL_BTN = "h-full border border-[#d2d2d2] bg-[#fafafa] text-[#666] ";

function FilesPanel() {
  return (
    <aside className="flex w-[286px] shrink-0 flex-col bg-[#dedede]">
      <div className="flex h-[22px] shrink-0 items-center justify-end gap-[7px] bg-linear-to-b from-[#b3d0e4] to-[#a3c3d9] pr-[7px]">
        <button aria-label="Panel menu"><Caret /></button>
        <button aria-label="Pin panel"><Svg w={9} h={12}><path d="M2.500 0v6M6 0v6M2 .5h5M0 6.500h9M4.500 7v5" stroke="#222" strokeWidth="1.400" /></Svg></button>
        <button aria-label="Close panel"><Cross s={8} /></button>
      </div>
      <div className="flex h-0 grow flex-col gap-[15px] overflow-hidden pt-[9px]">
        {GROUPS.map(([title, items]) => (
          <div key={title} className="mr-[12px] shrink-0">
            <div className="flex h-[24px] items-center justify-between rounded-tr-[4px] bg-[#b5b5b5] pl-[20px] pr-[4px] text-[11px] font-bold text-[#111]">
              <span className="pt-[2px]">{title}</span>
              <button aria-label={"Collapse " + title} className="flex size-[15px] items-center justify-center rounded-full bg-white shadow-[0_0_2px_#778]">
                <Svg w={7} h={9}><path d="M.5 4l3-3 3 3M.5 8l3-3 3 3" stroke="#2a3c6e" strokeWidth="1.300" /></Svg>
              </button>
            </div>
            <ul className="bg-white pl-[49px] pt-[1px] text-[11px] leading-[22px] text-[#111]">
              {items.map((t) => <li key={t}><a href="#open">{t}</a></li>)}
            </ul>
          </div>
        ))}
      </div>
      <div className="flex h-[20px] shrink-0 border-t border-[#c9c9c9] bg-[#f0f0f0] pl-[44px] text-[11px] text-[#666]">
        {[["Projects", "w-[54px]"], ["Navigator", "w-[63px]"], ["SCH Filter", "w-[63px]"]].map(([t, w]) => (
          <button key={t} className={"mb-[1px] border-b border-r border-[#c9c9c9] bg-white pt-[1px] " + w}>{t}</button>
        ))}
      </div>
    </aside>
  );
}

function DocumentArea() {
  return (
    <main className="flex min-w-0 flex-1 flex-col bg-[#f0f0f0]">
      <div className="flex h-[25px] shrink-0 bg-[#a8a8a8] text-[11px]">
        <button className="flex w-[106px] items-center gap-[5px] bg-[#dedede] pl-[6px] text-black">
          <Svg w={14} h={13}><rect x=".5" y=".5" width="13" height="12" fill="#f8d060" stroke="#8a6420" /><path d="M8 8h5v4H8z" fill="#fff" stroke="#8a6420" /></Svg>Sheet1.SchDoc
        </button>
        <button className="flex items-center gap-[5px] pl-[5px] text-[#f3f3f3]">
          <Svg w={15} h={13}><path d="M0 1h15v10H0z" fill="#1c5a3c" /><path d="M2 3v6M5 3v6M8 3v6M11 3v6" stroke="#58d08a" strokeDasharray="2 1" strokeWidth="1.600" /><path d="M5 12h9" stroke="#c8e03c" strokeWidth="1.500" /></Svg>PCB1.PcbDoc
        </button>
      </div>
      <div className="flex h-0 grow">
        <div className="flex min-w-0 flex-1 justify-end overflow-hidden bg-linear-to-b from-[#dedede] to-[#bcbcbc] pt-[2px]">
          <SchematicSheet />
        </div>
        <div className="flex w-[16px] flex-col items-center bg-[#ececec] pt-[8px]">
          <Svg w={8} h={5}><path d="M0 5h8L4 0z" fill="#333" /></Svg>
          <div className="mt-[35px] flex h-[348px] w-[15px] items-center justify-center rounded-[2px] border border-[#979797] bg-linear-to-r from-[#f5f5f5] to-[#c5c5c8]">
            <Svg w={7} h={8}><path d="M0 1h7M0 4h7M0 7h7" stroke="#555" /></Svg>
          </div>
          <Caret color="#333" cls="mb-[5px] mt-auto" />
        </div>
      </div>
      <div className="flex h-[17px] shrink-0 items-center bg-[#ececec] pr-[23px]">
        <Svg w={18} h={8}><path d="M10 0v8L6 4z" fill="#333" /></Svg>
        <div className="flex h-[15px] w-[1068px] items-center justify-center rounded-[2px] border border-[#979797] bg-linear-to-b from-[#f5f5f5] via-[#e4e4e6] to-[#c5c5c8]">
          <Svg w={8} h={7}><path d="M1 0v7M4 0v7M7 0v7" stroke="#555" /></Svg>
        </div>
        <span className="flex-1" />
        <CaretRight color="#333" w={4} h={8} />
      </div>
      <div className="flex h-[20px] shrink-0 border-t border-[#c9c9c9] text-[11px]">
        <button className="mb-[2px] w-[43px] border-b border-r border-[#b5b5b5] bg-[#dedede] pt-[1px] font-bold text-black">Editor</button>
        <span className="flex-1" />
        <button aria-label="Highlight pen" className={PANEL_BTN + "flex w-[33px] items-center justify-center"}>
          <Svg w={16} h={16}><path d="M4 8l5-7 4 1-5 7-5 2z" fill="#a9bdd6" stroke="#40506a" /><path d="M3 11l2-3 2 1.500z" fill="#e0b04a" /><path d="M0 14h6M10 14h6" stroke="#6a6af8" strokeWidth="3.500" /></Svg>
        </button>
        <button aria-label="Filter" className={PANEL_BTN + "flex w-[33px] items-center justify-center"}>
          <Svg w={26} h={14}><circle cx="3.500" cy="3.500" r="2.500" fill="#f7f24a" stroke="#555" /><circle cx="3.500" cy="10.500" r="2.500" fill="#f7f24a" stroke="#555" /><path d="M9 2v10l5-5z" fill="#777" /><path d="M15.500 2.500h10l-4 4v5h-2v-5z" fill="#b8e0e8" stroke="#333" /></Svg>
        </button>
        <button className={PANEL_BTN + "w-[65px]"}>Mask Level</button>
        <button className={PANEL_BTN + "w-[34px]"}>Clear</button>
      </div>
    </main>
  );
}

const RoundArrow = ({ c, flip = false }: { c: string; flip?: boolean }) => (
  <Svg cls={flip ? "-scale-x-100" : ""}><circle cx="8" cy="8" r="7.500" fill={c} /><path d="M8 4L4 8l4 4M4.500 8H12" stroke="#fff" strokeWidth="2" /></Svg>
);

function EditorWindow() {
  return (
    <section className={"absolute left-[-60px] top-[321px] flex h-[827px] w-[1631px] flex-col rounded-tr-[7px] border-t border-[#3a4a5c] bg-linear-to-b from-[#b5c9dc] from-20% via-[#6e7f8e] via-27% to-[#10161b] to-30% pb-[6px] pr-[5px] shadow-[0_0_10px_rgba(0,0,0,0.7)] ring-1 ring-[#8d9aa6] " + UI}>
      <div className="-mr-[5px] flex h-[28px] shrink-0 justify-between rounded-tr-[7px] bg-linear-to-r from-[#8b97a4] via-[#cfe3f8] via-12% to-[#a9cdf2] pl-[25px] pr-[5px]">
        <h2 className="pt-[4px] text-[12px] leading-[18px] text-black">Altium Designer (13.3) - C:\Users\soltys\AppData\Local\Temp\Temp1_PCB2-2014-08-05.zip\PCB2\Sheet1.SchDoc [Read-Only] - Free Documents. Not signed in.</h2>
        <WindowButtons active />
      </div>
      <div className="flex min-h-0 flex-1 flex-col border-t border-[#5a6a7a] bg-[#f0f0f0]">
        <div className="flex h-[25px] shrink-0 items-center pl-[71px] text-[12px] text-black">
          <nav className="flex gap-[14px]">{MENUS.map((m) => <button key={m}><Mnemonic text={m} /></button>)}</nav>
          <span className="flex-1" />
          <div className="flex h-[22px] w-[200px] items-center overflow-hidden bg-white">
            <span className="flex w-[189px] justify-end overflow-hidden whitespace-nowrap">C:\Users\soltys\AppData\Local\Ter</span>
            <button aria-label="Show addresses" className="ml-[3px]"><Caret cls="scale-75" /></button>
          </div>
          <div className="flex items-center gap-[4px] pl-[4px] pr-[7px]">
            <button aria-label="Go back"><RoundArrow c="#8fae68" /></button><Caret cls="scale-75" />
            <button aria-label="Go forward"><RoundArrow c="#b9b9b9" flip /></button><Caret color="#999" cls="scale-75" />
            <button aria-label="Home page"><Svg><path d="M7 6h3v10H7z" fill="#c59a3c" /><path d="M0 9q0-4 4-4 1-4 5-4v8z" fill="#5aa832" /><path d="M8 3q7 0 8 5l-3 2q-3-1-5-1z" fill="#3f7fd8" /></Svg></button>
          </div>
        </div>
        <div className="flex h-[26px] shrink-0 items-center bg-[#f3f3f3] pl-[59px]">
          {TOOLBAR.map((n, i) => <ToolbarItem key={i} name={n} />)}
          <span className="flex-1" />
          <div className="flex items-center text-[#999]">
            <select aria-label="Font" className="h-[21px] w-[100px] appearance-none border border-[#a8a8a8] bg-[#f0f0f0]" />
            <Caret color="#999" cls="-ml-[12px] mr-[4px] scale-75" />
            <select aria-label="Font size" className="h-[21px] w-[37px] appearance-none border border-[#a8a8a8] bg-[#f0f0f0]" />
            <Caret color="#999" cls="-ml-[12px] mr-[8px] scale-75" />
            <button aria-label="Line width" className="flex items-center gap-[5px]"><Svg><path d="M1 3h14M1 7.500h14M1 13h14" stroke="#999" strokeWidth="2.400" /></Svg><Caret color="#999" cls="scale-75" /></button>
            <button aria-label="Line style" className="ml-[8px] flex items-center gap-[5px]"><Svg><path d="M0 3h16M0 12.500h16" stroke="#999" strokeDasharray="1 1" /><path d="M0 6h16M0 9h16" stroke="#999" strokeDasharray="2 1" /></Svg><Caret color="#999" cls="scale-75" /></button>
            <button aria-label="Arrow style" className="ml-[8px] mr-[8px] flex items-center gap-[5px]"><Svg><path d="M0 3h15M11 1l4 2-4 2M15 8H1M5 6L1 8l4 2M0 13h15M11 11l4 2-4 2M4 11l-4 2 4 2" stroke="#999" /></Svg><Caret color="#999" cls="scale-75" /></button>
          </div>
        </div>
        <div className="flex min-h-0 flex-1 bg-[#a8a8a8] pt-[3px]">
          <FilesPanel />
          <span className="flex w-[3px] items-center"><span className="h-[26px] w-px border-l border-dotted border-white" /></span>
          <DocumentArea />
          <div className="ml-[4px] mr-[4px] flex w-[25px] shrink-0 flex-col items-center gap-[3px] bg-[#f0f0f0] pt-[1px] text-[11px] text-[#667]">
            {[["Favorites", "h-[54px]"], ["Clipboard", "h-[54px]"], ["Libraries", "h-[49px]"]].map(([t, h]) => (
              <button key={t} className={"w-[20px] shrink-0 border border-[#dcdcdc] bg-[#fafafa] pt-[2px] text-left leading-[18px] [writing-mode:vertical-rl] " + h}>{t}</button>
            ))}
          </div>
        </div>
        <div className="h-[5px] shrink-0 border-b border-[#6d6d6d] bg-[#a8a8a8]" />
        <footer className="flex h-[22px] shrink-0 items-center pl-[60px] pr-[4px] text-[11px] text-[#666]">
          <span className="w-[19px] text-black">0</span>
          <span className="w-[412px] text-black">Grid:10</span>
          <span className="h-[16px] w-[487px] border-x border-[#a8a8a8]" />
          <span className="flex-1" />
          <div className="flex h-[18px]">
            {[["&System", "w-[53px]"], ["&Design Compiler", "w-[103px]"], ["S&CH", "w-[44px]"], ["&Help", "w-[44px]"], ["&Instruments", "w-[81px]"]].map(([t, w]) => (
              <button key={t} className={PANEL_BTN + "-mr-px " + w}><Mnemonic text={t} /></button>
            ))}
            <button className={PANEL_BTN + "ml-[5px] w-[18px] text-[9px]"}>&gt;&gt;</button>
          </div>
        </footer>
      </div>
    </section>
  );
}

/* ---------- floating sheet panel ---------- */

function SheetWindow() {
  return (
    <section className={"absolute left-[875px] top-[142px] h-[414px] w-[464px] rounded-[7px] border border-[#2f3b46] bg-linear-to-b from-[#3c4449] via-[#b4d4f4] via-20% to-[#b4d4f4] px-[7px] py-[6px] shadow-[3px_4px_14px_rgba(0,0,0,0.75)] " + UI}>
      <div className="pointer-events-none absolute inset-0 rounded-[6px] border border-[#dcebf8]" />
      <div className="flex h-full flex-col border border-[#4b5a68] bg-[#dedede]">
        <div className="flex h-[22px] shrink-0 items-center bg-linear-to-b from-[#b6d1e5] to-[#a3c3d9] pl-[4px] pr-[6px] text-[12px] font-semibold text-black">
          <span className="flex-1">Sheet</span>
          <button aria-label="Panel menu" className="mr-[8px]"><Caret /></button>
          <button aria-label="Close panel"><Cross s={8} /></button>
        </div>
        <div className="mx-[9px] mt-[10px] flex flex-col border-r-2 border-[#8a8a8a] bg-[#f0f0f0] pr-[5px]">
          <div className="border-b border-[#6d6d6d] bg-linear-to-b from-[#e4e4e4] to-[#bcbcbc]"><SheetPreview /></div>
          <div className="flex h-[31px] items-center pl-[8px] text-[11px] text-black">
            <button aria-label="Previous"><Svg w={6} h={10}><path d="M6 0v10L0 5z" fill="#999" /></Svg></button>
            <button className="ml-[7px] h-[22px] w-[115px] whitespace-nowrap rounded-[3px] border border-[#777] bg-linear-to-b from-[#f2f2f2] to-[#d4d4d4]">Interactive Navigation</button>
            <button aria-label="Navigation options" className="ml-[2px] h-[22px] w-[23px] rounded-[3px] border border-[#777] bg-linear-to-b from-[#f2f2f2] to-[#d4d4d4]">...</button>
            <button aria-label="Next" className="ml-[7px]"><Svg w={6} h={10}><path d="M0 0v10l6-5z" fill="#999" /></Svg></button>
            <input aria-label="Zoom level" defaultValue="66" className="ml-[17px] h-[20px] w-[27px] border border-[#ddd] bg-white pl-[2px]" />
            <button aria-label="Fit sheet" className="ml-[10px]"><Svg><PageShape /><MagBase /></Svg></button>
            <button aria-label="Zoom out" className="ml-[5px]"><Svg><circle cx="6.500" cy="6.500" r="5" fill="#dcecfa" stroke="#54708f" strokeWidth="1.400" /><path d="M4 6.500h5" stroke="#2a4a78" strokeWidth="1.600" /><path d="M10.500 10.500l4 4" stroke="#c08a3c" strokeWidth="3" /></Svg></button>
            <input
              type="range" aria-label="Zoom" defaultValue={66}
              className="ml-[12px] h-[14px] w-[116px] appearance-none bg-transparent [&::-webkit-slider-runnable-track]:h-[4px] [&::-webkit-slider-runnable-track]:border [&::-webkit-slider-runnable-track]:border-[#b0b0b0] [&::-webkit-slider-runnable-track]:bg-[#e8e8e8] [&::-webkit-slider-thumb]:-mt-[4px] [&::-webkit-slider-thumb]:h-[10px] [&::-webkit-slider-thumb]:w-[6px] [&::-webkit-slider-thumb]:appearance-none [&::-webkit-slider-thumb]:rounded-b-[3px] [&::-webkit-slider-thumb]:border [&::-webkit-slider-thumb]:border-[#777] [&::-webkit-slider-thumb]:bg-[#f2f2f2]"
            />
            <button aria-label="Zoom in" className="ml-[11px]"><Svg><circle cx="6.500" cy="6.500" r="5" fill="#dcecfa" stroke="#54708f" strokeWidth="1.400" /><path d="M4 6.500h5M6.500 4v5" stroke="#2a4a78" strokeWidth="1.600" /><path d="M10.500 10.500l4 4" stroke="#c08a3c" strokeWidth="3" /></Svg></button>
          </div>
        </div>
        <div className="mt-auto flex h-[20px] border-t border-[#c9c9c9] bg-[#f0f0f0] text-[11px] text-[#555]">
          <button className="mb-[1px] w-[84px] border-b border-r border-[#c9c9c9] bg-white">SCH Inspector</button>
          <button className="mb-[1px] w-[54px] border-b border-r border-[#c9c9c9] bg-white">SCH List</button>
          <button className="-mt-px mb-[1px] w-[42px] border-b border-r border-[#b5b5b5] bg-[#dedede] font-semibold text-black">Sheet</button>
        </div>
      </div>
    </section>
  );
}

/* ---------- taskbar ---------- */

function Taskbar() {
  const btn = "flex h-[38px] w-[59px] items-center justify-center rounded-[3px] border ";
  return (
    <footer className={"relative flex h-[39px] w-full shrink-0 items-start border-t border-[#6a6f73] bg-linear-to-r from-[#080c10] via-[#0a0f16] to-[#12161a] text-[12px] text-white " + UI}>
      <button aria-label="Start" className="ml-[8px] mr-[14px]">
        <Svg w={38} h={38}>
          <defs><radialGradient id="orb" cx=".5" cy=".95" r=".95"><stop offset="0" stopColor="#3fe0ff" /><stop offset=".4" stopColor="#1f6fb0" /><stop offset="1" stopColor="#16385c" /></radialGradient></defs>
          <circle cx="19" cy="19" r="18" fill="url(#orb)" stroke="#7fa6bf" />
          <path d="M3 16a16 16 0 0 1 32 0q-16 6-32 0z" fill="#fff" opacity=".3" />
          <path d="M10 11q4-3 8 0l-2 7q-4-2-8 0z" fill="#e8682c" />
          <path d="M20 12q4 2 9-1l-2 8q-4 2-9 0z" fill="#8fc43c" />
          <path d="M7 20q4-2 8 0l-2 7q-4-2-8 0z" fill="#48a4e0" />
          <path d="M17 21q4 2 9 0l-2 7q-4 3-9 0z" fill="#fcc83c" />
        </Svg>
      </button>
      <div className="flex gap-[3px]">
        <button aria-label="Google Chrome" className={btn + "border-[#8c8f92] bg-linear-to-br from-[#6b6e71] to-[#1e2226]"}><ChromeLogo s={28} /></button>
        <button aria-label="File Explorer" className={btn + "border-[#8c8f92] bg-linear-to-br from-[#4b4e51] to-[#1a1e22]"}>
          <Svg w={34} h={30}><path d="M2 3h10l1 3h18v20H2z" fill="#f0d27c" /><path d="M3 7h30v19H3z" fill="#f8e6a0" stroke="#d8b860" /><path d="M6 3h4v2H6z" fill="#3fa83f" /><path d="M14 4h4v2h-4z" fill="#d84a3c" /><path d="M22 6h4v2h-4z" fill="#3c8fd8" /><path d="M7 29V19q0-2 2-2h17q2 0 2 2v10h-4v-7H11v7z" fill="#8fcdea" stroke="#5a9fc4" /></Svg>
        </button>
        <button aria-label="Altium Designer" className={btn + "border-[#d0d2d4] bg-linear-to-br from-[#c9cbcd] via-[#7d8083] to-[#55585b]"}>
          <Svg w={32} h={30}><path d="M10 1l21 2-9 16L1 15z" fill="#0c0c0c" /><path d="M13 7l6-2 4 3-5 5-7-2z" fill="#8a763c" /><path d="M12 12l8-6M16 6l5 5" stroke="#d8b040" strokeWidth="1.600" /><path d="M1 15l21 4v9L1 21z" fill="#f4f4f4" /><path d="M22 19l9-16v8l-9 17z" fill="#c8c8c8" /></Svg>
        </button>
      </div>
      <span className="flex-1" />
      <div className="flex h-full items-center gap-[10px]">
        <Svg w={16} h={16}><path d="M0 0h16v8q-3 7-10 8H0z" fill="#e0a830" /><circle cx="3" cy="3" r="2" fill="#fff" stroke="#555" /><path d="M6 0l10 11" stroke="#222" strokeWidth="2.500" /></Svg>
        <Svg w={14} h={14}><path d="M7 1l1 3 4-1-2 4 3 3-4 1-2 3-2-3-4 0 2-4-1-3 4 0z" fill="#000" /></Svg>
        <Svg w={12} h={14}><path d="M0 4h3l4-4v14L3 10H0z" fill="#fff" /><path d="M9 4q2 3 0 6" stroke="#fff" /></Svg>
      </div>
      <div className="ml-[18px] mr-[12px] w-[50px] whitespace-nowrap pt-[2px] text-center text-[11px] leading-[17px]"><div>4:44 PM</div><div>8/5/2014</div></div>
      <button aria-label="Show desktop" className="h-[38px] w-[14px] border border-[#55595d] bg-linear-to-b from-[#555] to-[#0b0e11]" />
    </footer>
  );
}

export default function App() {
  return (
    <div className="relative flex h-screen w-full flex-col overflow-hidden bg-black">
      <div className="relative min-h-0 flex-1 overflow-hidden">
        <div className="absolute left-[98px] top-[7px] h-[5px] w-[28px] bg-[#b9c0c6]" />
        <div className="absolute left-[30px] top-[8px] h-[4px] w-[20px] rounded-t bg-[#39434c]" />
        <div className={"absolute left-[4px] top-[40px] flex flex-col gap-[64px] text-[12px] leading-[18px] text-white " + UI}>
          <span className="pl-[4px]">I</span><span className="pl-[4px]">C</span><span className="pl-[1px]">E</span><span>B</span>
        </div>
        <BrowserWindow />
        <ExplorerWindow />
        <EditorWindow />
        <SheetWindow />
      </div>
      <Taskbar />
    </div>
  );
}
